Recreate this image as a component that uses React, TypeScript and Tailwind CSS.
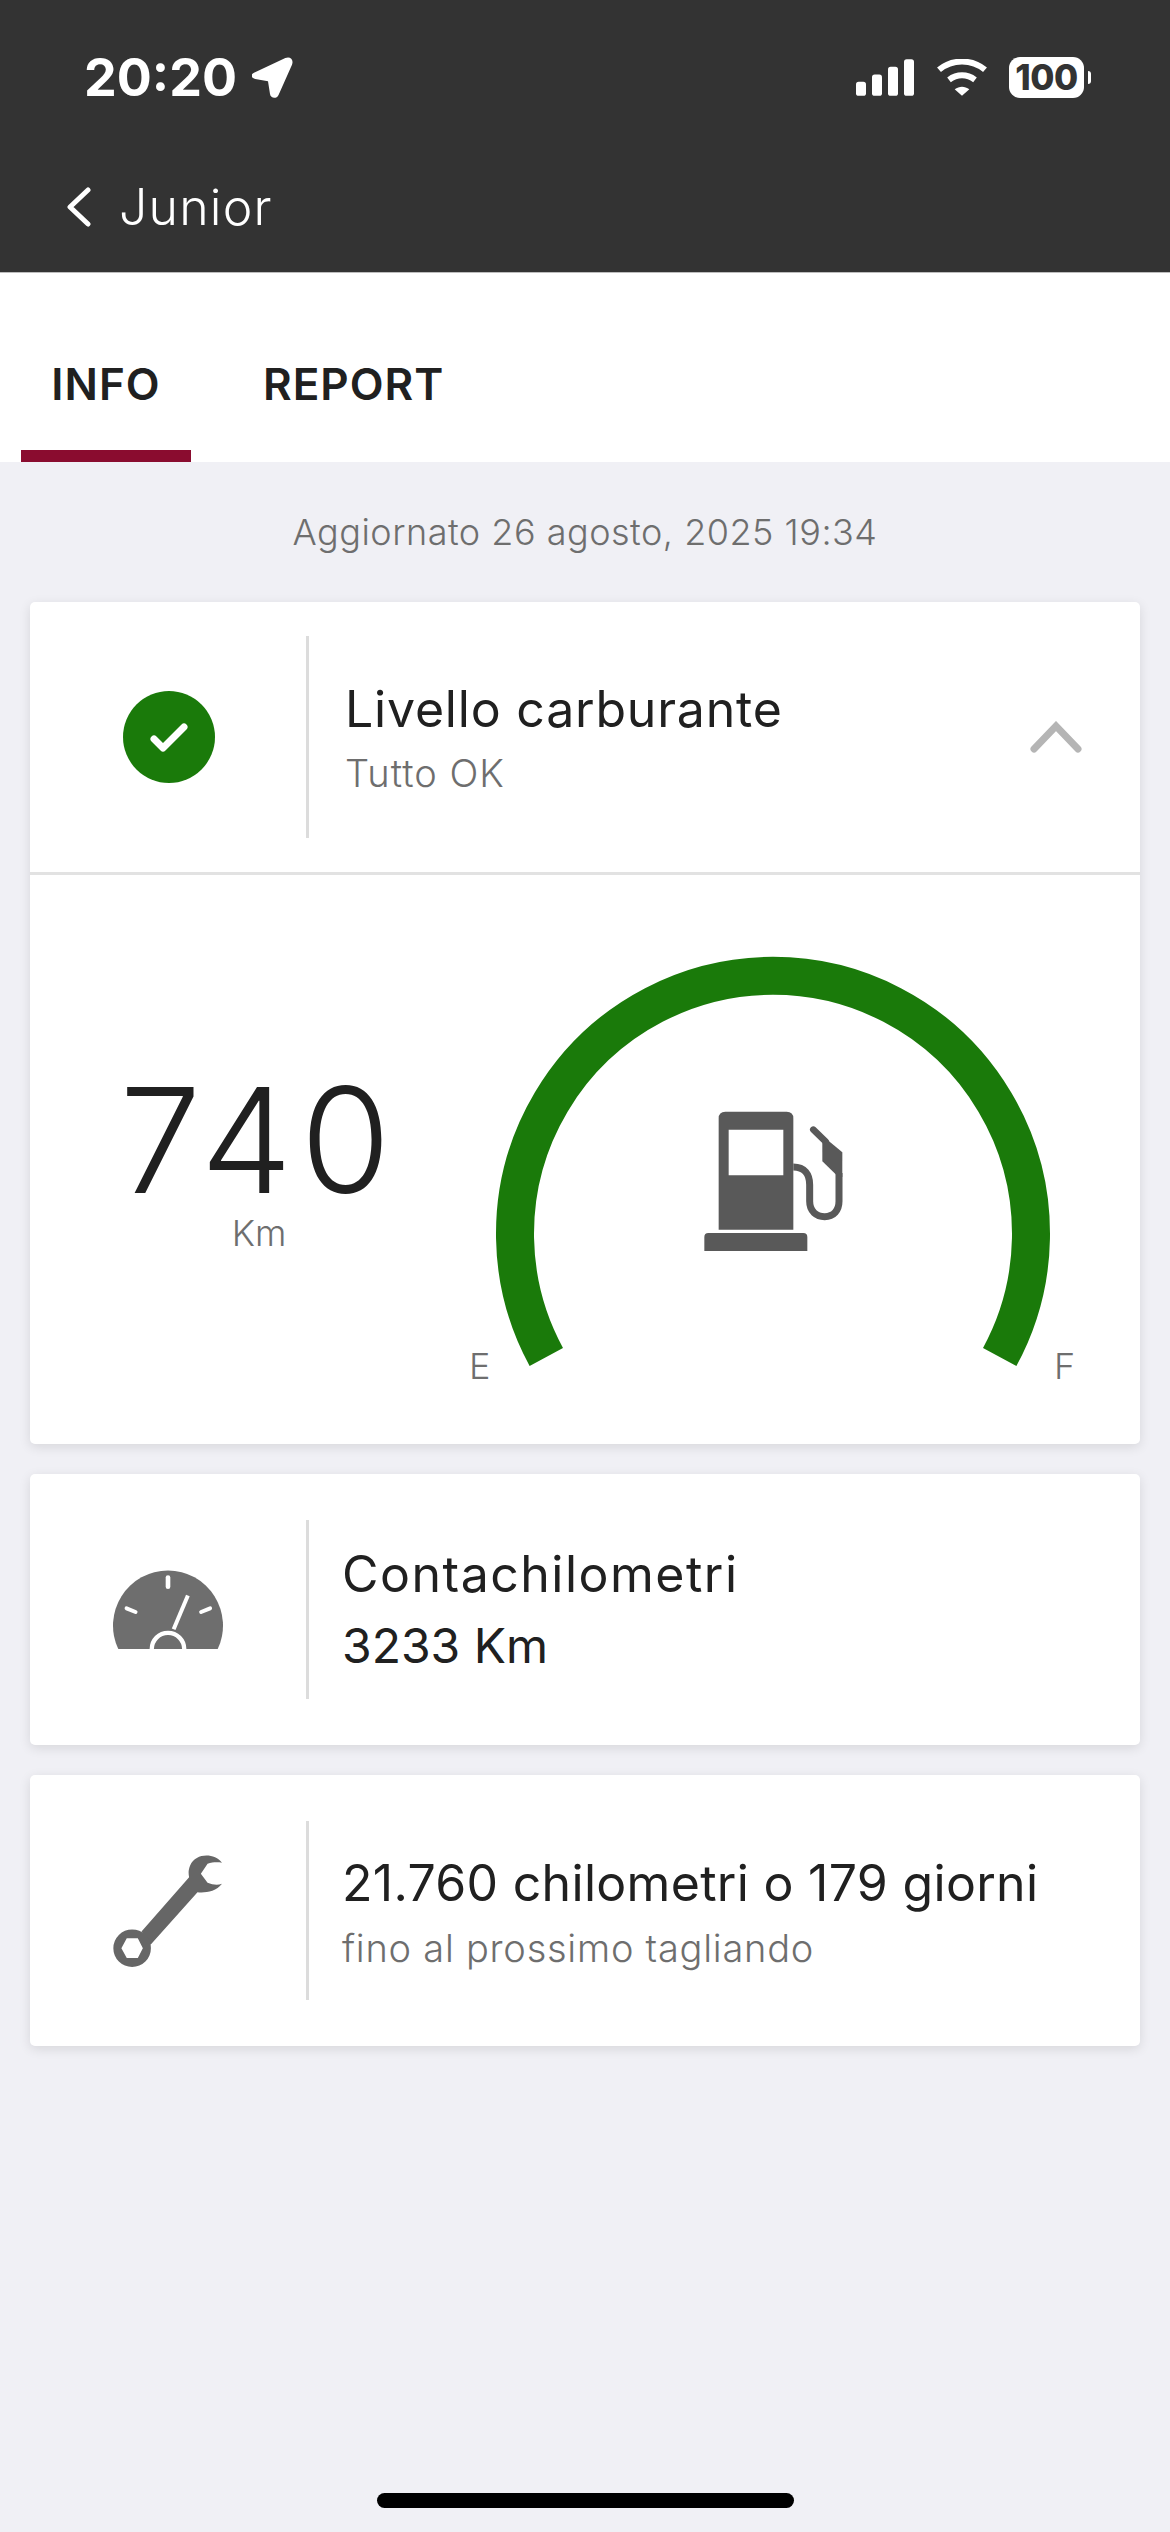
import React from "react";

const GREEN = "#1a7a0a";

const StatusIcons = () => (
  <div className="flex items-center">
    <svg width="58" height="37" viewBox="108 87 174 110" fill="#fff">
      <rect x="108" y="155" width="30" height="42" rx="8" />
      <rect x="156" y="133" width="30" height="64" rx="8" />
      <rect x="204" y="110" width="30" height="87" rx="8" />
      <rect x="252" y="87" width="30" height="110" rx="8" />
    </svg>
    <svg className="ml-[23px]" width="50" height="37" viewBox="350 88 150 110" fill="none" stroke="#fff" strokeWidth="18">
      <path d="M356 120 C 395 87, 455 87, 494 120" />
      <path d="M386 150 C 410 132, 440 132, 464 150" />
      <path d="M403 178 C 417 168, 433 168, 447 178 L425 198 Z" fill="#fff" stroke="none" />
    </svg>
    <div className="ml-[22px] w-[75px] h-[41px] rounded-[11px] bg-white flex items-center justify-center text-[#333] text-[35px] font-extrabold leading-none tracking-[-0.5px] font-['Inter',sans-serif]">
      100
    </div>
    <div className="ml-[4px] w-[3px] h-[13px] rounded-r-[3px] bg-white" />
  </div>
);

const LocationArrow = () => (
  <svg className="ml-[15px]" width="41" height="41" viewBox="572 85 123 123" fill="#fff">
    <path d="M578 132 L672 88 C686 82 698 92 692 108 L652 198 C646 212 628 210 626 196 L620 158 L586 152 C568 148 566 138 578 132 Z" />
  </svg>
);

const Chevron = () => (
  <svg width="52" height="32" viewBox="0 0 52 32" fill="none" stroke="#b5b5b5" strokeWidth="7" strokeLinecap="round" strokeLinejoin="miter">
    <path d="M4 28 L26 5 L48 28" />
  </svg>
);

const Pump = () => (
  <svg width="140" height="146" viewBox="130 94 420 438" fill="#595959" className="overflow-visible">
    <path
      fillRule="evenodd"
      d="M197 96 H381 Q401 96 401 116 V450 H177 V116 Q177 96 197 96 Z M207 150 V287 H371 V150 Z"
    />
    <path d="M146 460 H431 Q443 460 443 472 V514 H134 V472 Q134 460 146 460 Z" />
    <path
      d="M401 262 C 435 262 450 285 450 315 V 365 C 450 395 470 411 495 411 C 522 411 538 392 538 365 V 280"
      fill="none"
      stroke="#595959"
      strokeWidth="21"
    />
    <path d="M461 150 L498 186" fill="none" stroke="#595959" strokeWidth="20" strokeLinecap="round" />
    <path d="M488 190 L500 178 L548 218 V292 L528 284 L488 245 Z" />
  </svg>
);

const Gauge = () => (
  <div className="relative w-[700px] h-[474px]">
    <svg width="700" height="474" viewBox="0 0 700 474" fill="none">
      {/* centre of the dial: 773,1233 on the page */}
      <path
        d="M123.3 440 A258 258 0 1 1 576.7 440"
        stroke={GREEN}
        strokeWidth="38"
        strokeLinecap="butt"
      />
    </svg>
    <div className="absolute left-[280px] top-[194px] w-[140px] h-[146px]">
      <Pump />
    </div>
    <span className="absolute left-[46px] top-[431px] text-[36px] leading-none font-light text-[#6e6e6e]">E</span>
    <span className="absolute left-[631px] top-[431px] text-[36px] leading-none font-light text-[#6e6e6e]">F</span>
  </div>
);

const Speedometer = () => (
  <svg width="112" height="82" viewBox="96 120 338 244">
    <path d="M115 360 A166 166 0 1 1 415 360 Z" fill="#6e6e6e" />
    <g stroke="#fff" strokeLinecap="round" fill="none">
      <path d="M265 144 V172" strokeWidth="14" />
      <path d="M140 237 L167 248" strokeWidth="12" />
      <path d="M365 248 L392 237" strokeWidth="12" />
      <path d="M325 198 L282 300" strokeWidth="12" strokeLinecap="butt" />
      <path d="M216 360 A49 49 0 0 1 314 360" strokeWidth="13" strokeLinecap="butt" />
    </g>
  </svg>
);

const Wrench = () => (
  <svg width="112" height="114" viewBox="102 96 330 340" fill="#666">
    <path d="M428 122 C405 92 350 92 333 130 C327 145 328 155 330 165 L188 327 L215 367 L355 210 C375 212 410 210 428 185 C415 190 400 188 385 182 L365 155 L385 125 C400 120 415 120 428 122 Z" />
    <path
      fillRule="evenodd"
      d="M104 377 A56 56 0 1 1 216 377 A56 56 0 1 1 104 377 Z M128 377 L144 406 H177 L192 377 L177 347 H144 Z"
    />
  </svg>
);

const InfoCard = ({ icon, children }: { icon: React.ReactNode; children: React.ReactNode }) => (
  <div className="h-[271px] bg-white rounded-[5px] shadow-[0_3px_12px_rgba(0,0,0,0.11)] flex items-center">
    <div className="w-[276px] flex justify-center">{icon}</div>
    <div className="w-[3px] h-[179px] bg-[#dcdcdc]" />
    <div className="ml-[33px] flex flex-col">{children}</div>
  </div>
);

export default function App() {
  return (
    <div className="relative w-[1170px] h-[2532px] bg-[#f0f0f5] flex flex-col font-['Inter',sans-serif]">
      <header className="h-[273px] bg-[#333333] text-white flex flex-col border-b border-[#bdbdbd]">
        <div className="h-[155px] pl-[84px] pr-[79px] pt-[57px] flex justify-between items-start">
          <div className="flex items-center h-[41px]">
            <span className="text-[52px] font-bold leading-none font-['Inter',sans-serif]">20:20</span>
            <LocationArrow />
          </div>
          <StatusIcons />
        </div>
        <div className="flex items-center pl-[67px] mt-[28px] h-[48px]">
          <svg width="24" height="40" viewBox="0 0 24 40" fill="none" stroke="#fff" strokeWidth="5" strokeLinecap="round" strokeLinejoin="round">
            <path d="M21 3 L3 20 L21 37" />
          </svg>
          <span className="ml-[28px] text-[50px] leading-none font-light tracking-[1.2px]">Junior</span>
        </div>
      </header>

      <nav className="h-[189px] bg-white flex items-stretch pl-[21px] text-[44px] font-semibold tracking-[1px] text-[#202020]">
        <div className="w-[170px] border-b-[12px] border-[#8a0c2f] flex items-center justify-center pt-[44px]">INFO</div>
        <div className="ml-[72px] border-b-[12px] border-transparent flex items-center pt-[44px]">REPORT</div>
      </nav>

      <p className="mt-[50px] text-center text-[36px] leading-[40px] font-light tracking-[0.5px] text-[#6e6e6e]">Aggiornato 26 agosto, 2025 19:34</p>

      <main className="mt-[50px] px-[30px] flex flex-col gap-[30px]">
        <section className="bg-white rounded-[5px] shadow-[0_3px_12px_rgba(0,0,0,0.11)]">
          <div className="h-[273px] flex items-center border-b-[3px] border-[#e2e2e2]">
            <div className="w-[276px] pl-[2px] flex justify-center">
              <div className="w-[92px] h-[92px] rounded-full flex items-center justify-center bg-[#1a7a0a]">
                <svg width="40" height="31" viewBox="0 0 40 31" fill="none" stroke="#fff" strokeWidth="7" strokeLinecap="round" strokeLinejoin="round">
                  <path d="M5 17 L14 26 L35 5" />
                </svg>
              </div>
            </div>
            <div className="w-[3px] h-[202px] bg-[#dcdcdc]" />
            <div className="ml-[36px] flex-1 flex flex-col">
              <span className="text-[50px] leading-[62px] text-[#202020] tracking-[0.8px]">Livello carburante</span>
              <span className="mt-[10px] text-[38px] leading-[46px] font-light tracking-[1px] text-[#6e6e6e]">Tutto OK</span>
            </div>
            <div className="mr-[58px] flex items-center">
              <Chevron />
            </div>
          </div>
          <div className="h-[569px] flex">
            <div className="w-[458px] flex flex-col items-center pt-[205px]">
              <span className="text-[146px] leading-[120px] font-light tracking-[8px] text-[#202020]">740</span>
              <span className="mt-[11px] text-[36px] leading-[44px] font-light text-[#6e6e6e]">Km</span>
            </div>
            <div className="ml-[-65px] pt-[42px]">
              <Gauge />
            </div>
          </div>
        </section>

        <InfoCard icon={<Speedometer />}>
          <span className="text-[50px] leading-[71px] text-[#202020] tracking-[1.5px]">Contachilometri</span>
          <span className="text-[48px] leading-[71px] text-[#202020]">3233 Km</span>
        </InfoCard>

        <InfoCard icon={<Wrench />}>
          <span className="text-[50px] leading-[71px] text-[#202020] tracking-[0.3px]">21.760 chilometri o 179 giorni</span>
          <span className="mt-[4px] text-[38px] leading-[50px] font-light tracking-[0.75px] text-[#6e6e6e]">fino al prossimo tagliando</span>
        </InfoCard>
      </main>

      <div className="absolute left-[377px] bottom-[24px] w-[417px] h-[15px] rounded-full bg-black" />
    </div>
  );
}
